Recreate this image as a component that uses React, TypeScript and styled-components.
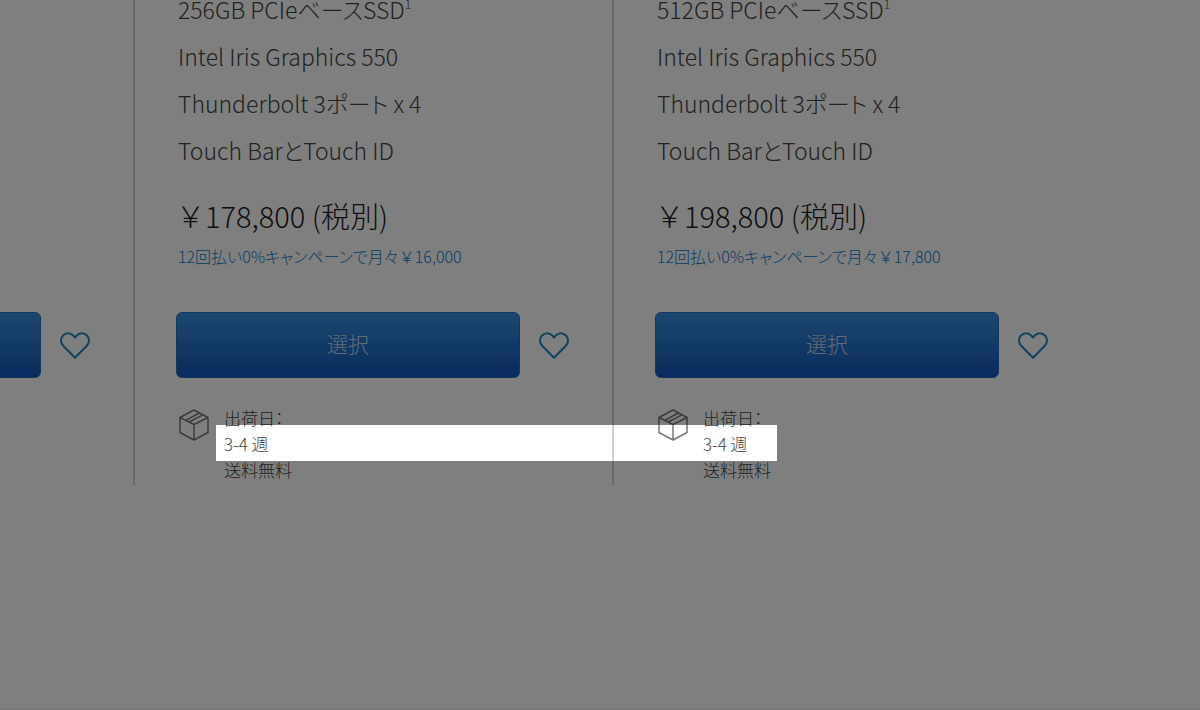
import React from "react";
import styled, { createGlobalStyle } from "styled-components";

const GlobalStyle = createGlobalStyle`
  *, *::before, *::after { box-sizing: border-box; }
  body {
    margin: 0;
    background: #fff;
    color: #444;
    font-family: "Noto Sans CJK JP", "Noto Sans", sans-serif;
    font-weight: 300;
    font-feature-settings: "palt";
  }
`;

const Page = styled.main`
  position: relative;
  overflow: hidden;
`;

const Models = styled.div`
  display: grid;
  grid-template-columns: 135px minmax(0, 1fr) minmax(0, 1fr) 107px;
  align-content: start;
  min-height: calc(100vh + 14px);
  margin-top: -14px;
  border-bottom: 1px solid #ececec;
`;

const Column = styled.section`
  display: flex;
  flex-direction: column;
  padding: 0 43px 2px 41px;
  border-right: 2px solid #d0d0d0;

  &:last-of-type {
    border-right-color: transparent;
  }
`;

const ClippedColumn = styled(Column)`
  margin-left: -300px;
  padding-top: 283px;
  padding-left: 0;
`;

const Specs = styled.ul`
  margin: 0;
  padding: 0 0 0 2px;
  list-style: none;
`;

const Spec = styled.li`
  height: 47px;
  font-size: 23px;
  line-height: 47px;
  white-space: nowrap;

  sup {
    font-size: 12px;
    line-height: 0;
    vertical-align: 10px;
  }
`;

const Yen = styled.span`
  font-feature-settings: normal;
`;

const Price = styled.p`
  margin: 21px 0 0;
  color: #222;
  font-size: 29px;
  line-height: 40px;
  white-space: nowrap;
`;

const Financing = styled.a`
  margin: 8px 0 0 2px;
  align-self: flex-start;
  color: #0d7ac8;
  font-size: 16px;
  line-height: 26px;
  text-decoration: none;
  white-space: nowrap;
`;

const Actions = styled.div`
  display: flex;
  align-items: center;
  gap: 19px;
  margin-top: 43px;
`;

const SelectButton = styled.button`
  flex: 1;
  min-width: 0;
  height: 66px;
  padding: 0 0 4px;
  border: 1px solid #2a6cb4;
  border-radius: 6px;
  background: linear-gradient(#388fe0, #0f58bb);
  color: #c4d6ec;
  font: inherit;
  font-size: 21px;
`;

const FavoriteButton = styled.button`
  display: flex;
  padding: 0;
  border: 0;
  background: none;
  color: #2484c0;
`;

const Shipping = styled.div`
  display: flex;
  gap: 15px;
  margin-top: 27px;
  padding-left: 3px;
`;

const BoxDrawing = styled.svg`
  flex: none;
  margin-top: 4px;
  color: #777;
`;

const ShippingText = styled.p`
  margin: 0;
  font-size: 17px;
  line-height: 26px;

  span {
    display: block;
  }
`;

const Spotlight = styled.div`
  position: absolute;
  top: 425px;
  left: 216px;
  width: 561px;
  height: 36px;
  box-shadow: 0 0 0 9999px rgba(0, 0, 0, 0.5);
  pointer-events: none;
`;

function Favorite() {
  return (
    <FavoriteButton type="button" aria-label="お気に入り">
      <svg width="30" height="27" viewBox="0 0 30 27" fill="none" stroke="currentColor" strokeWidth="2" strokeLinejoin="round">
        <path d="M15 25.800 3.200 13.800C.3 10.800.3 6.300 3 3.500 5.900.4 10.500.5 13.200 3.500L15 5.500l1.800-2C19.500.5 24.100.4 27 3.500c2.700 2.800 2.700 7.300-.2 10.300Z" />
      </svg>
    </FavoriteButton>
  );
}

function PackageBox() {
  return (
    <BoxDrawing width="30" height="32" viewBox="0 0 30 32" fill="none" stroke="currentColor" strokeWidth="1.500" strokeLinejoin="round" aria-hidden="true">
      <path d="M15 1 29 8.500v15L15 31 1 23.500v-15ZM1 8.500l14 7 14-7M15 15.500V31M20.500 4 6.500 11.300M24 5.900 10 13" />
    </BoxDrawing>
  );
}

type Model = { storage: string; price: string; monthly: string };

const models: Model[] = [
  { storage: "256GB", price: "178,800", monthly: "16,000" },
  { storage: "512GB", price: "198,800", monthly: "17,800" },
];

function ModelColumn({ storage, price, monthly }: Model) {
  return (
    <Column>
      <Specs>
        <Spec>{storage} PCIeベースSSD<sup>1</sup></Spec>
        <Spec>Intel Iris Graphics 550</Spec>
        <Spec>Thunderbolt 3ポート x 4</Spec>
        <Spec>Touch BarとTouch ID</Spec>
      </Specs>
      <Price><Yen>￥</Yen>{price} (税別)</Price>
      <Financing href="#financing">12回払い0%キャンペーンで月々<Yen>￥</Yen>{monthly}</Financing>
      <Actions>
        <SelectButton type="button">選択</SelectButton>
        <Favorite />
      </Actions>
      <Shipping>
        <PackageBox />
        <ShippingText>
          <span>出荷日：</span>
          <span>3-4 週</span>
          <span>送料無料</span>
        </ShippingText>
      </Shipping>
    </Column>
  );
}

export default function App() {
  return (
    <>
      <GlobalStyle />
      <Page>
        <Models>
          <ClippedColumn>
            <Actions>
              <SelectButton type="button" aria-label="選択" />
              <Favorite />
            </Actions>
          </ClippedColumn>
          {models.map((model) => (
            <ModelColumn key={model.storage} {...model} />
          ))}
        </Models>
        <Spotlight />
      </Page>
    </>
  );
}
